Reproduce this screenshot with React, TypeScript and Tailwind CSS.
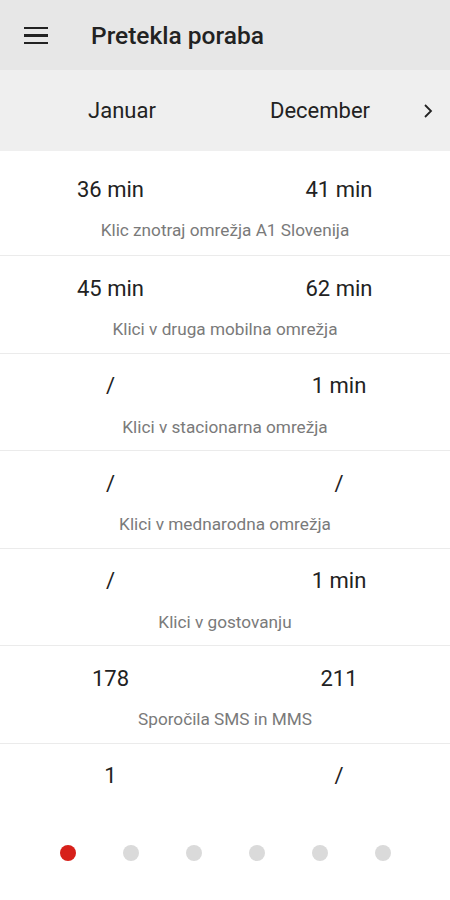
import React from "react";

const rows = [
  { a: "36 min", b: "41 min", label: "Klic znotraj omrežja A1 Slovenija" },
  { a: "45 min", b: "62 min", label: "Klici v druga mobilna omrežja" },
  { a: "/", b: "1 min", label: "Klici v stacionarna omrežja" },
  { a: "/", b: "/", label: "Klici v mednarodna omrežja" },
  { a: "/", b: "1 min", label: "Klici v gostovanju" },
  { a: "178", b: "211", label: "Sporočila SMS in MMS" },
];

export default function App() {
  return (
    <div className="w-[450px] h-[900px] bg-white overflow-hidden flex flex-col text-[#222222]" style={{ fontFamily: "Roboto, 'Noto Sans', sans-serif" }}>
      <div className="h-[70px] bg-[#e7e7e7] flex items-center shrink-0">
        <div className="w-[24px] ml-[24px] mt-[1px] flex flex-col gap-[5px]">
          <div className="h-[2.5px] bg-[#222]" />
          <div className="h-[2.5px] bg-[#222]" />
          <div className="h-[2.5px] bg-[#222]" />
        </div>
        <div className="ml-[43px] mt-[3px] text-[24.5px] font-medium">Pretekla poraba</div>
      </div>
      <div className="h-[81px] bg-[#efefef] flex items-center shrink-0">
        <div className="w-[23px]" />
        <div className="w-[198px] text-center text-[22px]">Januar</div>
        <div className="w-[198px] text-center text-[22px]">December</div>
        <div className="ml-[4px]">
          <svg width="10" height="16" viewBox="0 0 10 16">
            <path d="M2 2 L8 8 L2 14" fill="none" stroke="#222" strokeWidth="1.8" />
          </svg>
        </div>
      </div>
      {rows.map((r, i) => (
        <div
          key={i}
          className={`${i === 0 ? "h-[105px] pt-[25px]" : "h-[97.5px] pt-[19px]"} border-b border-[#ebebeb] flex flex-col shrink-0`}
        >
          <div className="flex h-[26px] items-center text-[22px]">
            <div className="w-[221px] shrink-0 text-center">{r.a}</div>
            <div className="w-[236px] shrink-0 text-center">{r.b}</div>
          </div>
          <div className="mt-[19px] h-[20px] flex items-center justify-center text-[17.2px] text-[#7a7a7a]">{r.label}</div>
        </div>
      ))}
      <div className="pt-[19px] shrink-0">
        <div className="flex h-[26px] items-center text-[22px]">
          <div className="w-[221px] shrink-0 text-center">1</div>
          <div className="w-[236px] shrink-0 text-center">/</div>
        </div>
      </div>
      <div className="mt-[56px] flex justify-center gap-[47px]">
        <div className="w-[16px] h-[16px] rounded-full bg-[#d7201a]" />
        {[0, 1, 2, 3, 4].map((k) => (
          <div key={k} className="w-[16px] h-[16px] rounded-full bg-[#dadada]" />
        ))}
      </div>
    </div>
  );
}
